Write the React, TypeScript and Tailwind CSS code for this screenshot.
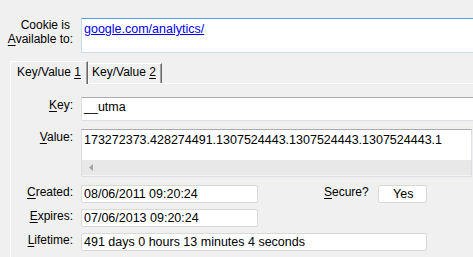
import React from 'react'

const FIELD = 'bg-white border border-[#dcdfe4] border-t-[#a9abb0] text-[12.5px] leading-[14px]'
const SMALL = 'bg-white border border-[#d9d9d9] rounded-[2px] h-[18px] pt-[1px] pl-[2px] text-[12.5px] leading-[14px]'

function Acc({ k, rest }: { k: string; rest: string }) {
  return (
    <>
      <span className="underline underline-offset-[2px]">{k}</span>
      {rest}
    </>
  )
}

function Label({ children, pt = 'pt-[1px]' }: { children: React.ReactNode; pt?: string }) {
  return <div className={`w-[62px] shrink-0 mr-[8px] text-right ${pt}`}>{children}</div>
}

export default function App() {
  return (
    <div className="w-[473px] h-[257px] overflow-hidden bg-[#f0f0f0] text-black text-[12px] leading-[14px] font-['Liberation_Sans',Arial,sans-serif]">

      {/* Cookie is available to */}
      <div className="flex pt-[18px]">
        <div className="w-[73px] shrink-0 mr-[8px] text-right">
          <div className="pr-[3px]">Cookie is</div>
          <div><Acc k="A" rest="vailable to:" /></div>
        </div>
        <div className="w-[400px] shrink-0 h-[35px] bg-white border border-[#c5dcef] border-t-[#569de5] pt-[3px] pl-[2px] text-[12.5px] leading-[14px]">
          <span className="text-[#0000ee] underline underline-offset-[1px]">google.com/analytics/</span>
        </div>
      </div>

      {/* Tabs */}
      <div className="flex items-end pl-[10px] mt-[8px] h-[22px]">
        <div className="relative z-10 -mb-px w-[78px] h-[23px] bg-[#f0f0f0] border-t border-l border-r border-white border-r-[#696969] rounded-tl-[2px] shadow-[inset_-1px_0_0_#a0a0a0] pt-[3px] pl-[6px]">
          Key/Value <Acc k="1" rest="" />
        </div>
        <div className="w-[74px] h-[20px] bg-[#f0f0f0] border-t border-l border-r border-white border-r-[#696969] rounded-tl-[2px] shadow-[inset_-1px_0_0_#a0a0a0] pt-[1px] pl-[3px]">
          Key/Value <Acc k="2" rest="" />
        </div>
      </div>

      {/* Panel */}
      <div className="ml-[10px] border-t border-l border-white pt-[13px] h-[200px]">
        <div className="flex">
          <Label><Acc k="K" rest="ey:" /></Label>
          <div className={`${FIELD} w-[400px] shrink-0 h-[24px] pt-[2px] pl-[2px]`}>__utma</div>
        </div>

        <div className="flex mt-[8px]">
          <Label pt="pt-[1px]"><Acc k="V" rest="alue:" /></Label>
          <div className={`${FIELD} w-[391px] shrink-0 h-[48px] flex flex-col`}>
            <div className="h-[30px] pt-[3px] pl-[2px] whitespace-nowrap">
              173272373.428274491.1307524443.1307524443.1307524443.1
            </div>
            <div className="h-[16px] bg-[#e8e8e8] border-b border-[#f4f4f4] flex items-center pl-[7px]">
              <svg width="5" height="7" viewBox="0 0 5 7">
                <path d="M4 0 L0 3.5 L4 7 Z" fill="#a3a3a3" />
              </svg>
            </div>
          </div>
        </div>

        <div className="flex mt-[8px] items-start">
          <Label pt="pt-0"><Acc k="C" rest="reated:" /></Label>
          <div className={`${SMALL} w-[177px] shrink-0`}>08/06/2011 09:20:24</div>
          <div className="ml-[66px] pt-0"><Acc k="S" rest="ecure?" /></div>
          <div className={`${SMALL} w-[49px] shrink-0 ml-[9px] text-center pl-0`}>Yes</div>
        </div>

        <div className="flex mt-[6px] items-start">
          <Label pt="pt-0"><Acc k="E" rest="xpires:" /></Label>
          <div className={`${SMALL} w-[177px] shrink-0`}>07/06/2013 09:20:24</div>
        </div>

        <div className="flex mt-[6px] items-start">
          <Label pt="pt-0"><Acc k="L" rest="ifetime:" /></Label>
          <div className={`${SMALL} w-[346px] shrink-0`}>491 days 0 hours 13 minutes 4 seconds</div>
        </div>
      </div>
    </div>
  )
}
